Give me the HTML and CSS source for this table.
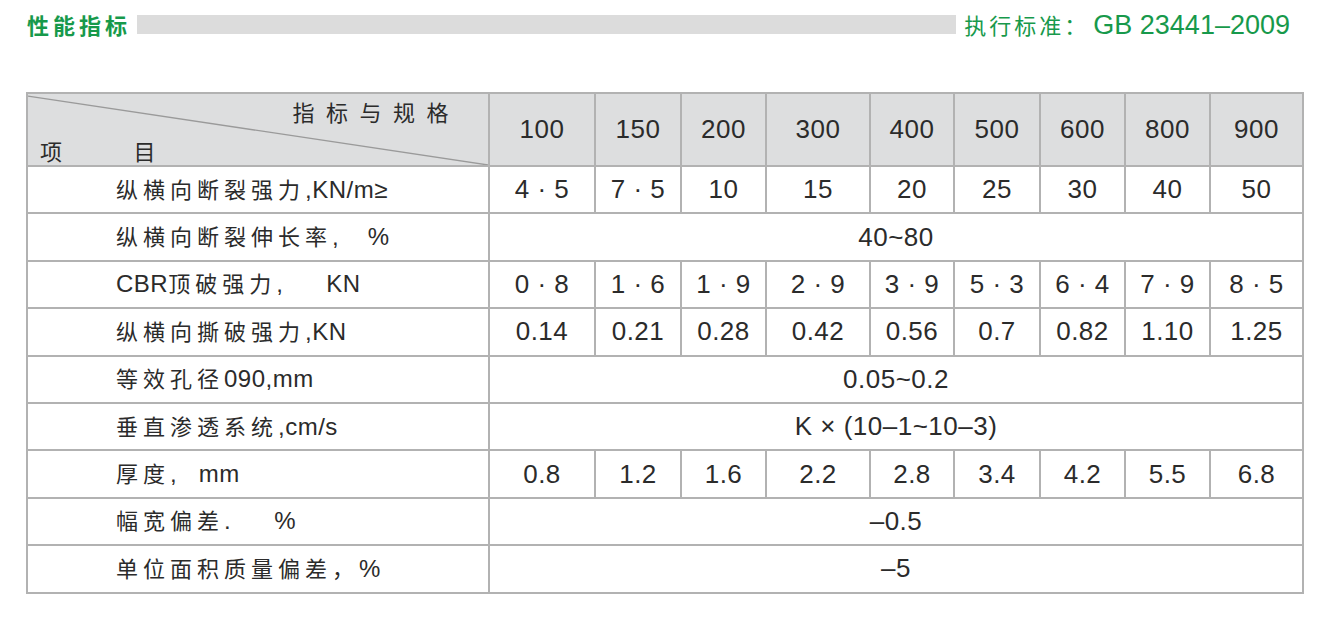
FILE: index.html
```html
<!DOCTYPE html>
<html lang="zh-CN">
<head>
<meta charset="utf-8">
<title>性能指标</title>
<link rel="stylesheet" href="styles.css">
</head>
<body>
<div class="titlebar">
  <span class="title">性能指标</span>
  <span class="bar"></span>
  <span class="standard"><span class="std-cn">执行标准：</span><span class="std-en">GB 23441–2009</span></span>
</div>

<table class="spec">
  <colgroup>
    <col class="c-label">
    <col class="c106"><col class="c86"><col class="c85"><col class="c104"><col class="c84"><col class="c86"><col class="c85"><col class="c85"><col class="c93">
  </colgroup>
  <thead>
    <tr class="head">
      <th class="diag">
        <svg class="diag-line" viewBox="0 0 100 100" preserveAspectRatio="none"><line x1="0" y1="3" x2="100" y2="100" stroke="#9a9a9a" stroke-width="1.3" vector-effect="non-scaling-stroke"/></svg>
        <div class="diag-top">指标与规格</div>
        <div class="diag-bottom"><span>项</span><span class="mu">目</span></div>
      </th>
      <th>100</th><th>150</th><th>200</th><th>300</th><th>400</th><th>500</th><th>600</th><th>800</th><th>900</th>
    </tr>
  </thead>
  <tbody>
    <tr>
      <td class="label">纵横向断裂强力<span class="en">,KN/m≥</span></td>
      <td>4 · 5</td><td>7 · 5</td><td>10</td><td>15</td><td>20</td><td>25</td><td>30</td><td>40</td><td>50</td>
    </tr>
    <tr>
      <td class="label">纵横向断裂伸长率<span class="en">,&nbsp;&nbsp;&nbsp;&nbsp;%</span></td>
      <td colspan="9">40~80</td>
    </tr>
    <tr>
      <td class="label"><span class="en">CBR</span>顶破强力<span class="en">,&nbsp;&nbsp;&nbsp;&nbsp;&nbsp;&nbsp;KN</span></td>
      <td>0 · 8</td><td>1 · 6</td><td>1 · 9</td><td>2 · 9</td><td>3 · 9</td><td>5 · 3</td><td>6 · 4</td><td>7 · 9</td><td>8 · 5</td>
    </tr>
    <tr>
      <td class="label">纵横向撕破强力<span class="en">,KN</span></td>
      <td>0.14</td><td>0.21</td><td>0.28</td><td>0.42</td><td>0.56</td><td>0.7</td><td>0.82</td><td>1.10</td><td>1.25</td>
    </tr>
    <tr>
      <td class="label">等效孔径<span class="en">090,mm</span></td>
      <td colspan="9">0.05~0.2</td>
    </tr>
    <tr>
      <td class="label">垂直渗透系统<span class="en">,cm/s</span></td>
      <td colspan="9">K × (10–1~10–3)</td>
    </tr>
    <tr>
      <td class="label">厚度<span class="en">,&nbsp;&nbsp;&nbsp;mm</span></td>
      <td>0.8</td><td>1.2</td><td>1.6</td><td>2.2</td><td>2.8</td><td>3.4</td><td>4.2</td><td>5.5</td><td>6.8</td>
    </tr>
    <tr>
      <td class="label">幅宽偏差<span class="en">.&nbsp;&nbsp;&nbsp;&nbsp;&nbsp;&nbsp;%</span></td>
      <td colspan="9">–0.5</td>
    </tr>
    <tr>
      <td class="label">单位面积质量偏差，<span class="en">%</span></td>
      <td colspan="9">–5</td>
    </tr>
  </tbody>
</table>
</body>
</html>
```

FILE: styles.css
```css
html, body {
  margin: 0;
  padding: 0;
  background: #ffffff;
}

body {
  font-family: "Liberation Sans", "Noto Sans CJK SC", sans-serif;
  color: #2b2b2b;
  width: 1341px;
}

.titlebar {
  display: flex;
  align-items: center;
  height: 48px;
  padding: 0 51px 0 27px;
}

.title {
  font-family: "Noto Sans CJK SC", sans-serif;
  font-weight: 700;
  font-size: 22px;
  line-height: 22px;
  letter-spacing: 4px;
  color: #17994b;
  white-space: nowrap;
}

.bar {
  flex: 1;
  height: 19px;
  margin: 0 8px 0 6px;
  background: #dcdcdc;
}

.standard {
  display: flex;
  align-items: baseline;
  color: #17994b;
  white-space: nowrap;
}

.std-cn {
  font-family: "Noto Sans CJK SC", sans-serif;
  font-size: 22px;
  letter-spacing: 3px;
  margin-right: 4px;
}

.std-en {
  font-family: "Liberation Sans", sans-serif;
  font-size: 27px;
}

.spec {
  border-collapse: collapse;
  margin: 44px 0 0 26px;
  width: 1276px;
  table-layout: fixed;
}

.c-label { width: 462px; }
.c106 { width: 106px; }
.c86 { width: 86px; }
.c85 { width: 85px; }
.c104 { width: 104px; }
.c84 { width: 84px; }
.c93 { width: 93px; }

.spec th,
.spec td {
  border: 2px solid #b2b2b2;
  padding: 0;
  text-align: center;
  font-size: 26px;
  font-weight: 400;
  letter-spacing: 0.5px;
  color: #2b2b2b;
  white-space: nowrap;
}

.spec thead th {
  background: #dddedf;
  height: 71px;
}

.spec tbody tr {
  height: 47.4px;
}

.spec td.label {
  text-align: left;
  padding: 0 0 4px 88px;
  font-family: "Noto Sans CJK SC", sans-serif;
  font-size: 22px;
  letter-spacing: 5px;
}

.label .en {
  font-family: "Liberation Sans", sans-serif;
  font-size: 24px;
  letter-spacing: 0.5px;
}

.spec th.diag {
  position: relative;
  vertical-align: top;
  text-align: left;
  padding: 0;
}

.diag-line {
  position: absolute;
  left: 0;
  top: 0;
  width: 100%;
  height: 100%;
}

.diag-top {
  position: relative;
  text-align: right;
  padding: 6px 28px 0 0;
  font-family: "Noto Sans CJK SC", sans-serif;
  font-size: 22px;
  line-height: 22px;
  letter-spacing: 11.5px;
}

.diag-bottom {
  position: relative;
  padding: 17px 0 0 12px;
  font-family: "Noto Sans CJK SC", sans-serif;
  font-size: 22px;
  line-height: 22px;
}

.diag-bottom .mu {
  margin-left: 71px;
}
```
